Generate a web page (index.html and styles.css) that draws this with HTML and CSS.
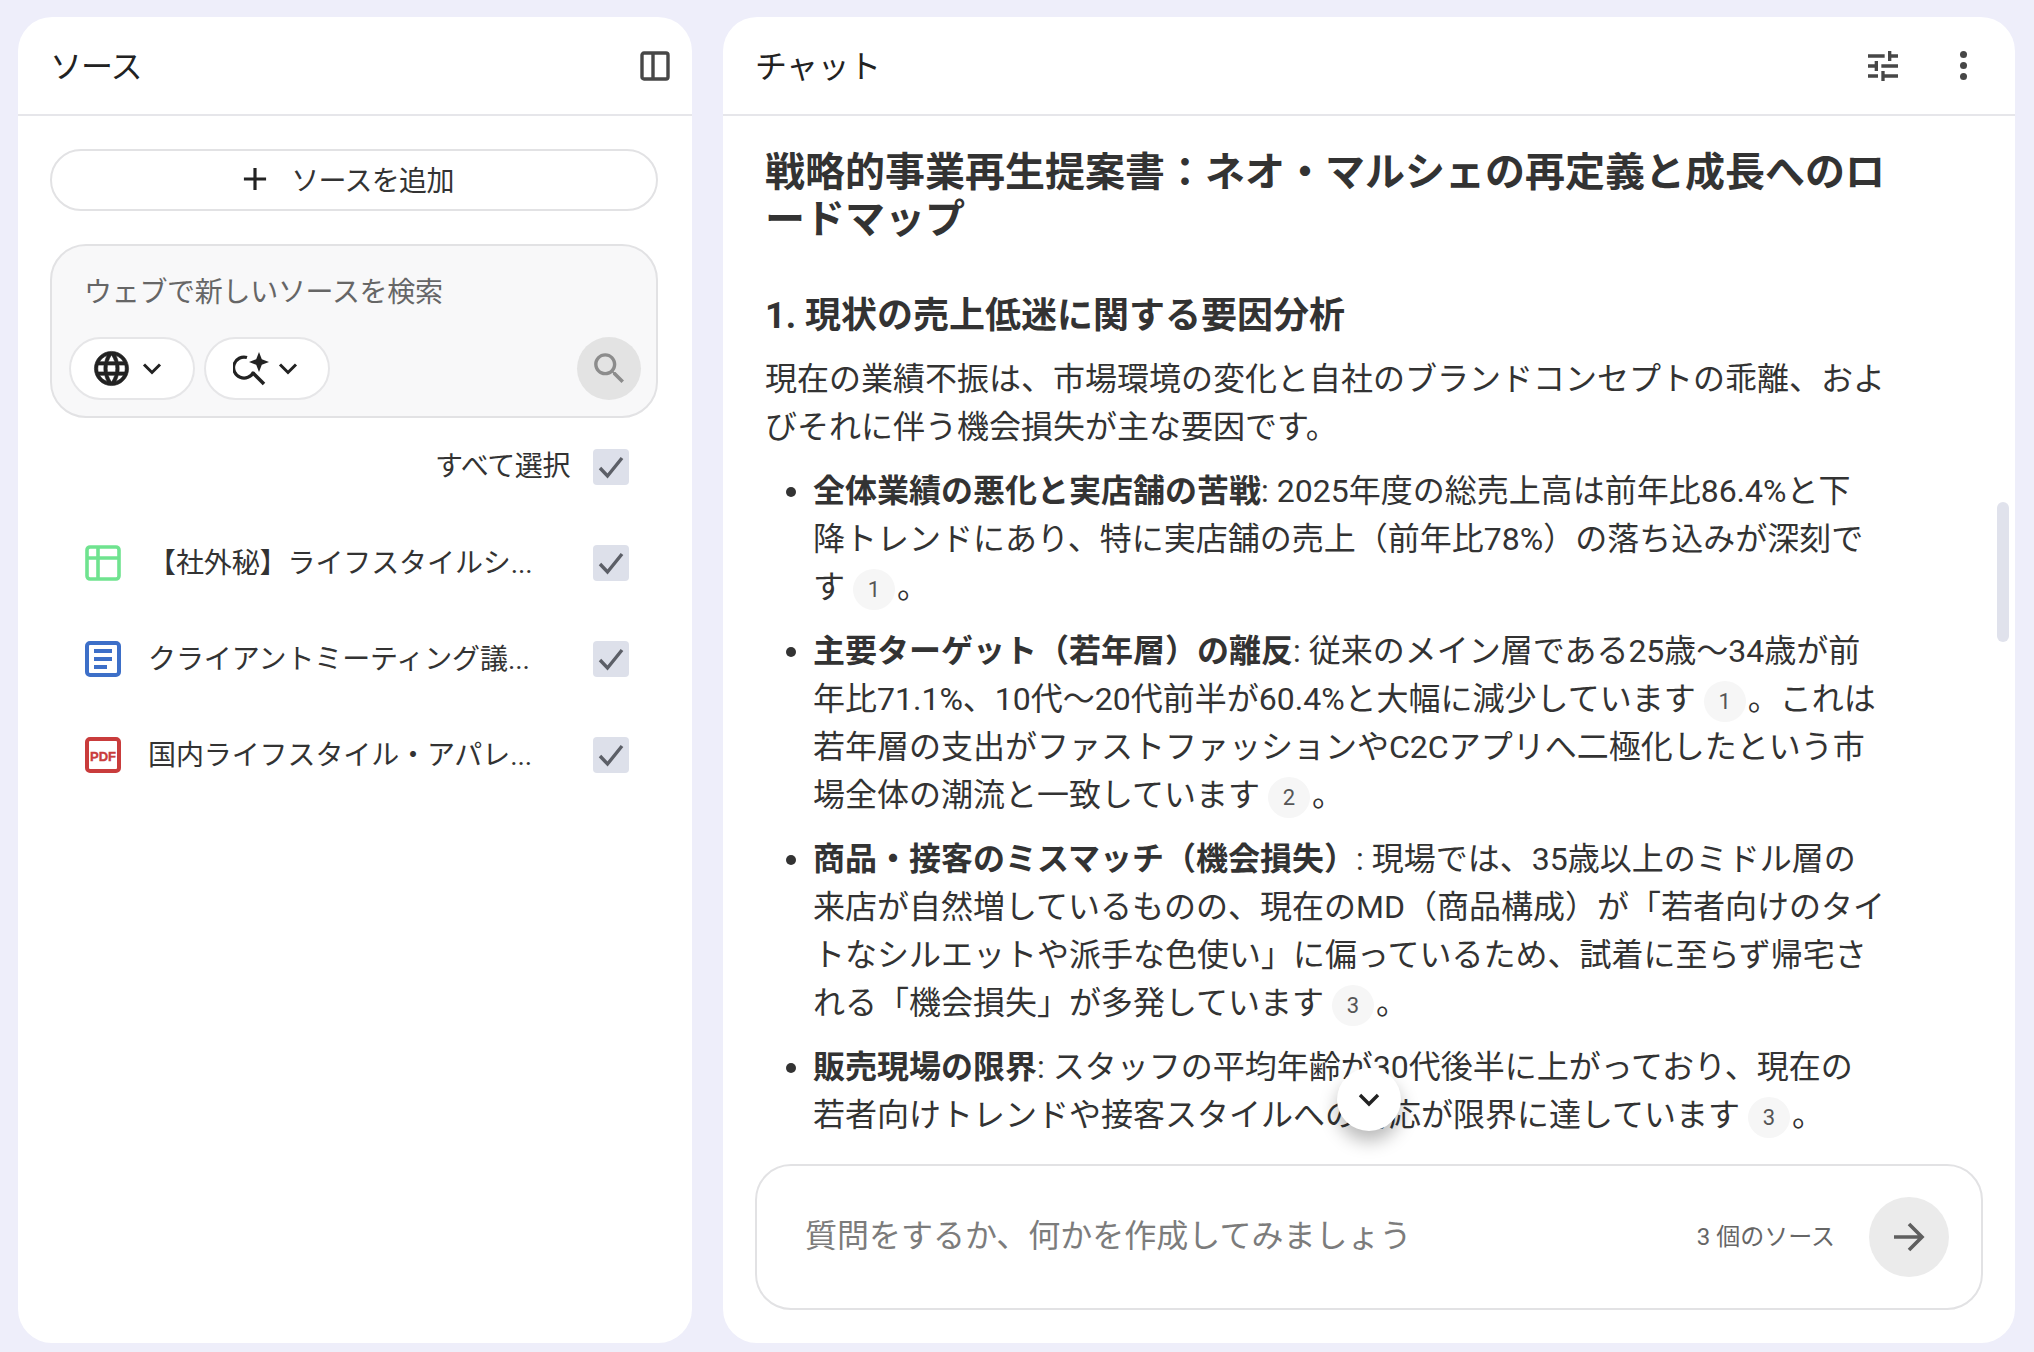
FILE: index.html
```html
<!DOCTYPE html>
<html lang="ja">
<head>
    <meta charset="UTF-8">
    <title>ソースとチャット</title>
    <link rel="stylesheet" href="styles.css">
</head>
<body>
    <!-- Sources panel -->
    <section class="panel sources">
        <header class="panel-head">
            <h2 class="panel-title">ソース</h2>
            <svg class="head-icon toggle-icon" viewBox="0 0 30 30"><rect x="2" y="2" width="26" height="26" rx="2" fill="none" stroke="#474747" stroke-width="3.4"/><path d="M13 2v26" stroke="#474747" stroke-width="3.4"/></svg>
        </header>
        <div class="sources-body">
            <button class="add-btn">
                <svg class="plus-icon" viewBox="0 0 24 24"><path d="M19 13h-6v6h-2v-6H5v-2h6V5h2v6h6v2z" fill="#222"/></svg>
                <span>ソースを追加</span>
            </button>

            <div class="search-box">
                <div class="search-hint">ウェブで新しいソースを検索</div>
                <div class="search-tools">
                    <div class="pill">
                        <svg class="globe-icon" viewBox="0 0 24 24"><path fill="#222" stroke="#222" stroke-width=".35" d="M11.99 2C6.47 2 2 6.48 2 12s4.47 10 9.99 10C17.52 22 22 17.52 22 12S17.52 2 11.99 2zm6.93 6h-2.95c-.32-1.25-.78-2.45-1.38-3.56 1.84.63 3.37 1.91 4.33 3.56zM12 4.04c.83 1.2 1.48 2.53 1.91 3.96h-3.82c.43-1.43 1.08-2.76 1.91-3.96zM4.26 14C4.1 13.36 4 12.69 4 12s.1-1.36.26-2h3.38c-.08.66-.14 1.32-.14 2s.06 1.34.14 2H4.26zm.82 2h2.95c.32 1.25.78 2.45 1.38 3.56-1.84-.63-3.37-1.9-4.33-3.56zm2.95-8H5.08c.96-1.66 2.49-2.93 4.33-3.56C8.81 5.55 8.35 6.75 8.03 8zM12 19.96c-.83-1.2-1.48-2.53-1.91-3.96h3.82c-.43 1.43-1.08 2.76-1.91 3.96zM14.34 14H9.66c-.09-.66-.16-1.32-.16-2s.07-1.35.16-2h4.68c.09.65.16 1.32.16 2s-.07 1.34-.16 2zm.25 5.56c.6-1.11 1.06-2.31 1.38-3.56h2.95c-.96 1.65-2.49 2.93-4.33 3.56zM16.36 14c.08-.66.14-1.32.14-2s-.06-1.34-.14-2h3.38c.16.64.26 1.31.26 2s-.1 1.36-.26 2h-3.38z"/></svg>
                        <svg class="chevron-icon" viewBox="0 0 20 14"><path d="M2 2.5l8 8 8-8" fill="none" stroke="#222" stroke-width="3"/></svg>
                    </div>
                    <div class="pill pill-spark">
                        <svg class="spark-icon" viewBox="0 0 36 34"><path d="M14 5.5A10.5 10.5 0 1 0 20.6 20" fill="none" stroke="#222" stroke-width="3.2"/><path d="M19.5 20.5L31 32" stroke="#222" stroke-width="3.6"/><path d="M26 0l2.8 7.2L36 10l-7.2 2.8L26 20l-2.8-7.2L16 10l7.2-2.8z" fill="#222"/></svg>
                        <svg class="chevron-icon" viewBox="0 0 20 14"><path d="M2 2.5l8 8 8-8" fill="none" stroke="#222" stroke-width="3"/></svg>
                    </div>
                    <div class="search-go">
                        <svg class="go-icon" viewBox="0 0 24 24"><path fill="#8c8c8c" d="M15.5 14h-.79l-.28-.27C15.41 12.59 16 11.11 16 9.5 16 5.91 13.09 3 9.5 3S3 5.91 3 9.5 5.91 16 9.5 16c1.61 0 3.09-.59 4.23-1.57l.27.28v.79l5 4.99L20.49 19l-4.99-5zm-6 0C7.01 14 5 11.99 5 9.5S7.01 5 9.5 5 14 7.01 14 9.5 11.99 14 9.5 14z"/></svg>
                    </div>
                </div>
            </div>

            <div class="select-all">
                <span>すべて選択</span>
                <div class="check"><svg viewBox="0 0 36 36"><path d="M7 19l7.5 8L29 9" fill="none" stroke="#5c5f67" stroke-width="3.4"/></svg></div>
            </div>

            <ul class="source-list">
                <li class="source-row">
                    <svg class="file-icon" viewBox="0 0 36 36"><rect x="2" y="2" width="32" height="32" rx="3" fill="none" stroke="#6fe38f" stroke-width="3.6"/><path d="M2 13h32M13 2v32" stroke="#6fe38f" stroke-width="3.6"/></svg>
                    <span class="source-name">【社外秘】ライフスタイルシ...</span>
                    <div class="check"><svg viewBox="0 0 36 36"><path d="M7 19l7.5 8L29 9" fill="none" stroke="#5c5f67" stroke-width="3.4"/></svg></div>
                </li>
                <li class="source-row">
                    <svg class="file-icon" viewBox="0 0 36 36"><rect x="2" y="2" width="32" height="32" rx="3" fill="none" stroke="#3d6fc8" stroke-width="4"/><path d="M9 10h18M9 18h18M9 26h13" stroke="#3d6fc8" stroke-width="4"/></svg>
                    <span class="source-name">クライアントミーティング議...</span>
                    <div class="check"><svg viewBox="0 0 36 36"><path d="M7 19l7.5 8L29 9" fill="none" stroke="#5c5f67" stroke-width="3.4"/></svg></div>
                </li>
                <li class="source-row">
                    <svg class="file-icon" viewBox="0 0 36 36"><rect x="2" y="2" width="32" height="32" rx="3" fill="none" stroke="#c93c3c" stroke-width="4"/><text class="pdf-label" x="18" y="23.5" text-anchor="middle">PDF</text></svg>
                    <span class="source-name">国内ライフスタイル・アパレ...</span>
                    <div class="check"><svg viewBox="0 0 36 36"><path d="M7 19l7.5 8L29 9" fill="none" stroke="#5c5f67" stroke-width="3.4"/></svg></div>
                </li>
            </ul>
        </div>
    </section>

    <!-- Chat panel -->
    <section class="panel chat">
        <header class="panel-head">
            <h2 class="panel-title chat-title">チャット</h2>
            <div class="head-actions">
                <svg class="tune-icon" viewBox="3 3 18 18"><path fill="#474747" d="M3 17v2h6v-2H3zM3 5v2h10V5H3zm10 16v-2h8v-2h-8v-2h-2v6h2zM7 9v2H3v2h4v2h2V9H7zm14 4v-2H11v2h10zm-6-4h2V7h4V5h-4V3h-2v6z"/></svg>
                <div class="more-dots"><i></i><i></i><i></i></div>
            </div>
        </header>

        <div class="chat-body">
            <h1 class="doc-title">戦略的事業再生提案書&#xFF1A;ネオ・マルシェの再定義と成長へのロ<br>ードマップ</h1>
            <h3 class="doc-heading">1. 現状の売上低迷に関する要因分析</h3>
            <p class="doc-text">現在の業績不振は、市場環境の変化と自社のブランドコンセプトの乖離、およ<br>びそれに伴う機会損失が主な要因です。</p>
            <ul class="doc-list">
                <li><b>全体業績の悪化と実店舗の苦戦</b>: 2025年度の総売上高は前年比86.4%と下<br>降トレンドにあり、特に実店舗の売上&#xFF08;前年比78%&#xFF09;の落ち込みが深刻で<br>す<span class="cite">1</span>。</li>
                <li><b>主要ターゲット&#xFF08;若年層&#xFF09;の離反</b>: 従来のメイン層である25歳〜34歳が前<br>年比71.1%、10代〜20代前半が60.4%と大幅に減少しています<span class="cite">1</span>。これは<br>若年層の支出がファストファッションやC2Cアプリへ二極化したという市<br>場全体の潮流と一致しています<span class="cite">2</span>。</li>
                <li><b>商品・接客のミスマッチ&#xFF08;機会損失&#xFF09;</b>: 現場では、35歳以上のミドル層の<br>来店が自然増しているものの、現在のMD&#xFF08;商品構成&#xFF09;が「若者向けのタイ<br>トなシルエットや派手な色使い」に偏っているため、試着に至らず帰宅さ<br>れる「機会損失」が多発しています<span class="cite">3</span>。</li>
                <li><b>販売現場の限界</b>: スタッフの平均年齢が30代後半に上がっており、現在の<br>若者向けトレンドや接客スタイルへの対応が限界に達しています<span class="cite">3</span>。</li>
            </ul>
            <div class="scroll-thumb"></div>
        </div>

        <button class="scroll-down">
            <svg viewBox="0 0 24 16"><path d="M3 3l9 9 9-9" fill="none" stroke="#222" stroke-width="3.4"/></svg>
        </button>

        <div class="composer">
            <span class="composer-hint">質問をするか、何かを作成してみましょう</span>
            <span class="composer-count">3 個のソース</span>
            <button class="send-btn">
                <svg viewBox="0 0 32 30"><path d="M1 15h28M16 2l13 13-13 13" fill="none" stroke="#5f5f5f" stroke-width="3.6"/></svg>
            </button>
        </div>
    </section>
</body>
</html>
```

FILE: styles.css
```css
* {
    box-sizing: border-box;
}
html, body {
    height: 100%;
}
body {
    margin: 0;
    padding: 17px 19px 9px 18px;
    display: flex;
    gap: 31px;
    overflow: hidden;
    background-color: #eeeefa;
    color: #333333;
    font-family: Roboto, "Noto Sans CJK JP", sans-serif;
}
.panel {
    display: flex;
    flex-direction: column;
    background-color: #ffffff;
    border-radius: 34px;
    position: relative;
    overflow: hidden;
}
.sources {
    width: 674px;
    flex-shrink: 0;
}
.chat {
    flex: 1;
}
.panel-head {
    height: 99px;
    flex-shrink: 0;
    display: flex;
    align-items: center;
    justify-content: space-between;
    padding: 0 22px 0 32px;
    border-bottom: 2px solid #e6e6ea;
}
.panel-title {
    margin: 0;
    padding-bottom: 4px;
    font-size: 32px;
    font-weight: 400;
    letter-spacing: -1px;
    color: #222222;
}
.chat-title {
    letter-spacing: -0.6px;
}
.toggle-icon {
    width: 30px;
    height: 30px;
}
.head-actions {
    display: flex;
    align-items: center;
    gap: 62px;
    padding-right: 26px;
}
.tune-icon {
    width: 30px;
    height: 30px;
}
.more-dots {
    display: flex;
    flex-direction: column;
    gap: 4px;
}
.more-dots i {
    width: 7px;
    height: 7px;
    border-radius: 50%;
    background-color: #474747;
}

/* sources */
.sources-body {
    padding: 33px 34px 0 32px;
}
.add-btn {
    width: 100%;
    height: 62px;
    display: flex;
    align-items: center;
    justify-content: center;
    gap: 17px;
    padding: 0 20px 3px 2px;
    background-color: #ffffff;
    border: 2px solid #e2e2e4;
    border-radius: 31px;
    font: inherit;
    font-size: 28px;
    letter-spacing: -0.7px;
    color: #333333;
}
.plus-icon {
    width: 38px;
    height: 38px;
}
.search-box {
    margin-top: 33px;
    height: 174px;
    display: flex;
    flex-direction: column;
    background-color: #f8f8f9;
    border: 2px solid #e2e2e4;
    border-radius: 36px;
    padding: 26px 15px 0 17px;
}
.search-hint {
    padding-left: 15px;
    font-size: 28px;
    line-height: 42px;
    letter-spacing: -0.3px;
    color: #666666;
}
.search-tools {
    margin-top: 23px;
    display: flex;
    align-items: center;
    gap: 9px;
}
.pill {
    width: 126px;
    height: 63px;
    display: flex;
    align-items: center;
    gap: 10px;
    padding-left: 20px;
    background-color: #ffffff;
    border: 2px solid #e6e6e8;
    border-radius: 32px;
}
.pill-spark {
    gap: 9px;
    padding-left: 27px;
}
.globe-icon {
    width: 41px;
    height: 41px;
}
.spark-icon {
    width: 36px;
    height: 34px;
}
.chevron-icon {
    width: 20px;
    height: 14px;
}
.search-go {
    width: 64px;
    height: 63px;
    margin-left: auto;
    display: flex;
    align-items: center;
    justify-content: center;
    background-color: #e3e3e3;
    border-radius: 50%;
}
.go-icon {
    width: 41px;
    height: 41px;
}
.select-all {
    margin-top: 31px;
    padding-right: 29px;
    display: flex;
    align-items: center;
    justify-content: flex-end;
    gap: 23px;
    font-size: 28px;
    line-height: 36px;
    letter-spacing: -0.4px;
}
.check {
    width: 36px;
    height: 36px;
    flex-shrink: 0;
    background-color: #dde0ea;
    border-radius: 4px;
}
.check svg {
    display: block;
    width: 36px;
    height: 36px;
}
.source-list {
    list-style: none;
    margin: 60px 0 0;
    padding: 0 29px 0 35px;
    display: flex;
    flex-direction: column;
    gap: 60px;
}
.source-row {
    height: 36px;
    display: flex;
    align-items: center;
    font-size: 28px;
}
.file-icon {
    width: 36px;
    height: 36px;
    flex-shrink: 0;
}
.pdf-label {
    font-family: "Liberation Sans", sans-serif;
    font-size: 13px;
    font-weight: 700;
    fill: #c93c3c;
    stroke: #c93c3c;
    stroke-width: 0.4px;
}
.source-name {
    flex: 1;
    margin-left: 27px;
    padding-bottom: 5px;
    white-space: nowrap;
    letter-spacing: -0.1px;
    color: #333333;
}

/* chat */
.chat-body {
    flex: 1;
    min-height: 0;
    padding: 33px 40px 0 42px;
    overflow: hidden;
    position: relative;
}
.doc-title {
    margin: 0;
    font-size: 40px;
    line-height: 47px;
    font-weight: 700;
}
.doc-heading {
    margin: 49px 0 0;
    font-size: 36px;
    line-height: 48px;
    font-weight: 700;
}
.doc-text {
    margin: 15px 0 0;
    font-size: 32px;
    line-height: 48px;
}
.doc-list {
    margin: 16px 0 0;
    padding-left: 48px;
    font-size: 32px;
    line-height: 48px;
}
.doc-list li {
    margin-bottom: 16px;
}
.cite {
    display: inline-block;
    width: 42px;
    height: 41px;
    margin: -10px 2px -10px 8px;
    border-radius: 50%;
    background-color: #f6f6f6;
    font-size: 22px;
    line-height: 41px;
    text-align: center;
    color: #555555;
    vertical-align: 1px;
}
.scroll-thumb {
    position: absolute;
    top: 386px;
    right: 6px;
    width: 12px;
    height: 140px;
    border-radius: 6px;
    background-color: #e0e2ec;
}
.scroll-down {
    position: absolute;
    left: 614px;
    top: 1051px;
    width: 64px;
    height: 63px;
    padding: 0;
    border: none;
    border-radius: 50%;
    background-color: #ffffff;
    box-shadow: 0 10px 18px rgba(0, 0, 0, 0.28);
    display: flex;
    align-items: center;
    justify-content: center;
}
.scroll-down svg {
    width: 24px;
    height: 16px;
}
.composer {
    height: 146px;
    flex-shrink: 0;
    margin: 0 32px 33px 32px;
    display: flex;
    align-items: center;
    padding: 0 32px 0 48px;
    border: 2px solid #e2e2e4;
    border-radius: 36px;
}
.composer-hint {
    flex: 1;
    padding-bottom: 8px;
    font-size: 32px;
    color: #7c7c7c;
}
.composer-count {
    padding-bottom: 6px;
    font-size: 24px;
    color: #666666;
    margin-right: 34px;
}
.send-btn {
    width: 80px;
    height: 80px;
    padding: 0;
    border: none;
    border-radius: 50%;
    background-color: #ebebeb;
    display: flex;
    align-items: center;
    justify-content: center;
}
.send-btn svg {
    width: 32px;
    height: 30px;
}
```
